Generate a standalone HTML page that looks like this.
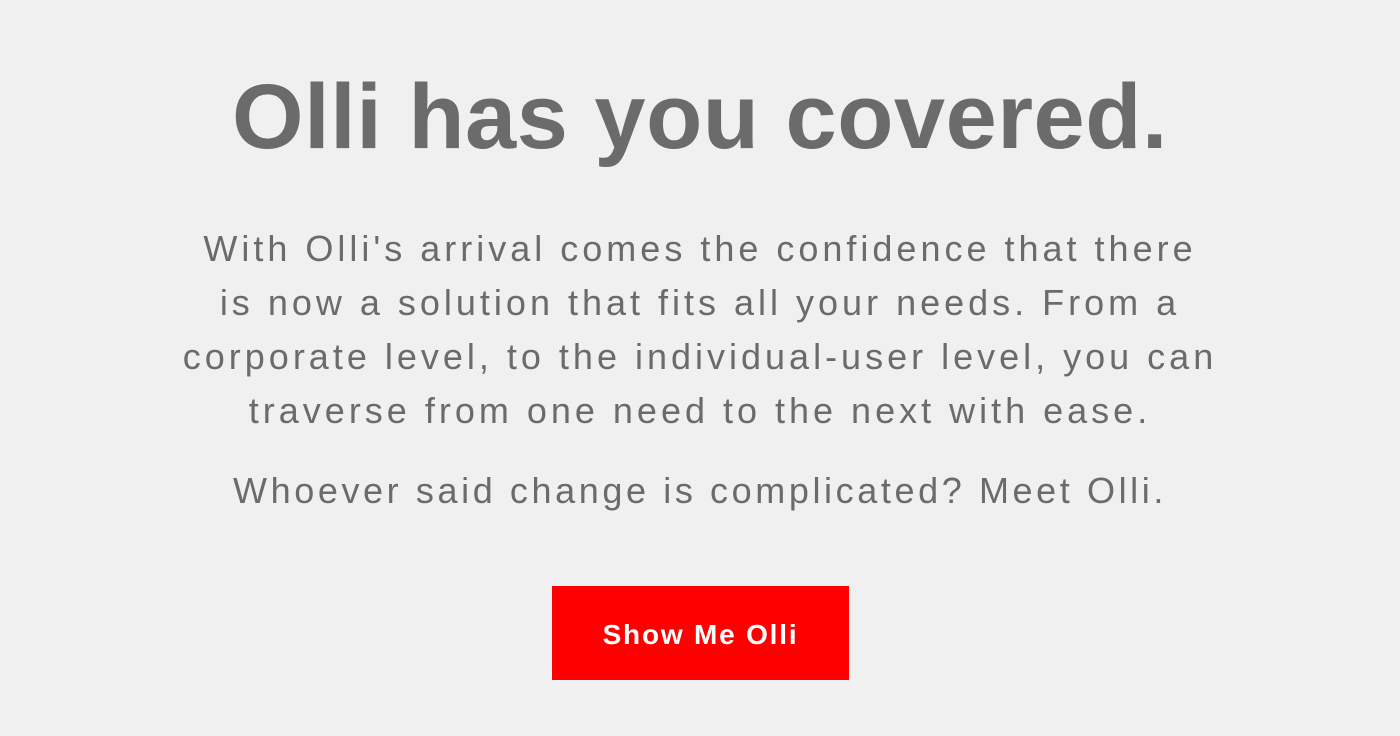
<!DOCTYPE html>
<html><head><style>
html,body{margin:0;padding:0;background:#f0f0f0;width:1400px;height:736px;overflow:hidden;font-family:"Liberation Sans",sans-serif;color:#6b6b6b}
h1{position:absolute;top:62px;left:0;width:1400px;text-align:center;margin:0;font-size:92px;font-weight:bold;line-height:110px;letter-spacing:0.5px}
.p{position:absolute;left:0;width:1400px;text-align:center;font-size:36px;line-height:54px;letter-spacing:4px}
.btn{position:absolute;left:552px;top:586px;width:297px;height:94px;background:#ff0000;color:#fff;font-weight:bold;font-size:28px;line-height:98px;text-align:center;letter-spacing:1.8px}
</style></head><body>
<h1>Olli has you covered.</h1>
<div class="p" style="top:222px">With Olli's arrival comes the confidence that there<br>is now a solution that fits all your needs. From a<br>corporate level, to the individual-user level, you can<br>traverse from one need to the next with ease.</div>
<div class="p" style="top:464px;letter-spacing:3.6px">Whoever said change is complicated? Meet Olli.</div>
<div class="btn">Show Me Olli</div>
</body></html>
